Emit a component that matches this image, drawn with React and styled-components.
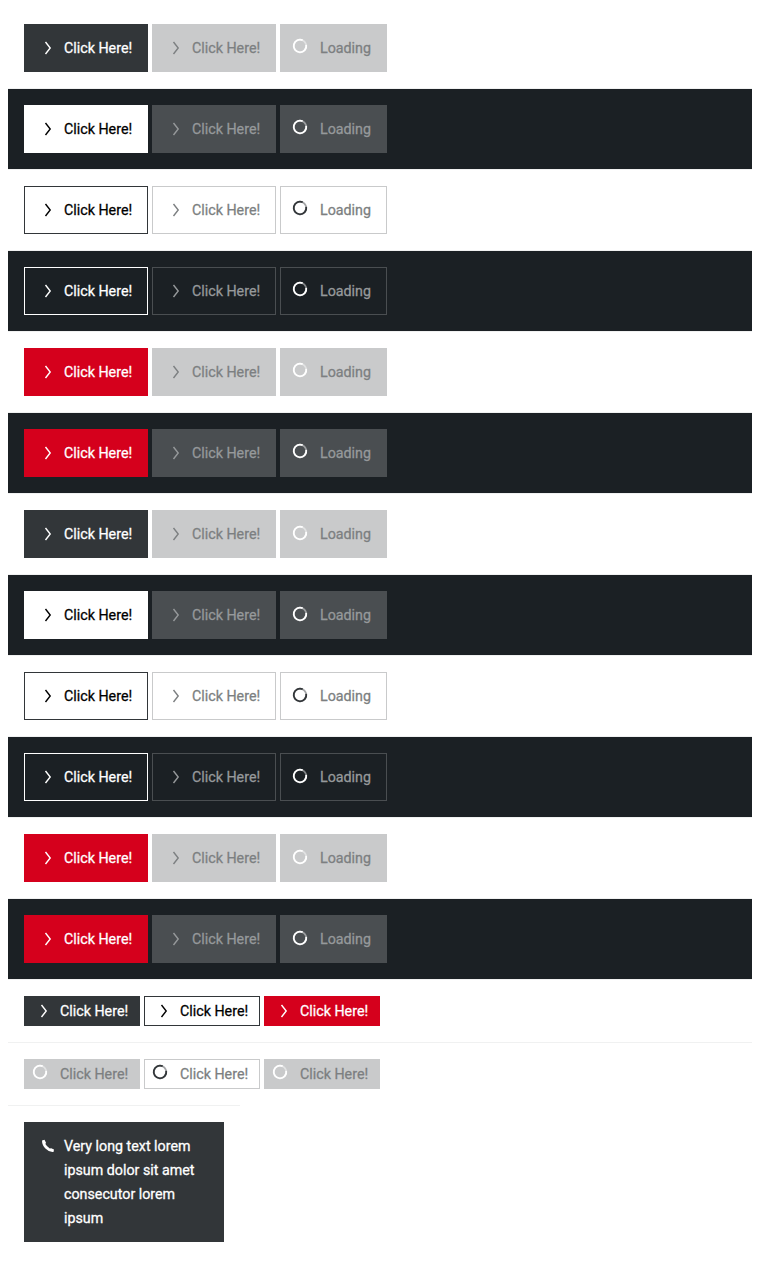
import React from "react";
import styled, { createGlobalStyle } from "styled-components";

const GlobalStyle = createGlobalStyle`
  body {
    margin: 8px;
    background: #fff;
    font-family: Roboto, "Liberation Sans", sans-serif;
  }
`;

const Row = styled.div`
  display: flex;
  gap: 4px;
  padding: 16px;
  background: ${(p) => (p.$dark ? "#1b2024" : "#fff")};
  & + & {
    border-top: 1px solid #f0f1f1;
  }
`;

const NarrowRow = styled(Row)`
  width: 200px;
`;

const palettes = {
  primary: ["#323639", "#323639", "#fff"],
  inverse: ["#fff", "#fff", "#000"],
  outline: ["#fff", "#323639", "#000"],
  outlineDark: ["#1b2024", "#fff", "#fff"],
  red: ["#d5001c", "#d5001c", "#fff"],
  muted: ["#c9cacb", "#c9cacb", "#7c7f81"],
  mutedDark: ["#4a4e51", "#4a4e51", "#96999b"],
  mutedOutline: ["#fff", "#c9cacb", "#7c7f81"],
  mutedOutlineDark: ["#1b2024", "#4a4e51", "#96999b"],
};

const ButtonBox = styled.button`
  box-sizing: border-box;
  display: flex;
  align-items: flex-start;
  margin: 0;
  width: ${(p) => p.$width}px;
  padding: ${(p) => (p.$small ? "2px 11px 2px 7px" : "11px 15px 11px 11px")};
  border: 1px solid ${(p) => palettes[p.$tone][1]};
  border-radius: 0;
  background: ${(p) => palettes[p.$tone][0]};
  color: ${(p) => palettes[p.$tone][2]};
  font: 400 15.5px/24px Roboto, "Liberation Sans", sans-serif;
  text-align: left;
`;

const WideButton = styled(ButtonBox)`
  height: 120px;
`;

const Icon = styled.svg`
  flex: none;
  width: 24px;
  height: 24px;
  margin-right: 4px;
`;

const Spinner = styled(Icon)`
  margin: ${(p) => p.$lift}px 8px 0 -4px;
  color: ${(p) => p.$color};
`;

const Label = styled.span`
  flex: none;
  white-space: pre;
  transform: scaleX(0.92);
  transform-origin: 0 50%;
  -webkit-text-stroke: 0.3px currentColor;
`;

const TextBlock = styled.span`
  display: flex;
  flex-direction: column;
`;

const Chevron = () => (
  <Icon viewBox="0 0 24 24">
    <path d="M9.5 6 L14.2 12 L9.5 18" fill="none" stroke="currentColor" strokeWidth="1.4" />
  </Icon>
);

const Loader = ({ color, lift }) => (
  <Spinner viewBox="0 0 24 24" $color={color} $lift={lift}>
    <circle cx="12" cy="12" r="6.3" fill="none" stroke="currentColor" strokeWidth="1.8" opacity="0.45" />
    <path d="M18.2 10.9 A6.3 6.3 0 1 1 14.7 6.3" fill="none" stroke="currentColor" strokeWidth="1.8" />
  </Spinner>
);

const Phone = () => (
  <Icon viewBox="0 0 24 24">
    <path
      d="M6 6.5 L8.5 5.8 L10 8.8 L9.4 10.1 Q11 12.8 13.8 14.6 L15.2 14.2 L18 15.6 L17.5 17.9 Q13 18.4 9.4 14.6 Q6 11 6 6.5Z"
      fill="currentColor"
    />
  </Icon>
);

const ActionButton = ({ tone, small, loading, spinner, lift = -2, text = "Click Here!" }) => (
  <ButtonBox
    type="button"
    $tone={tone}
    $small={small}
    $width={text === "Loading" ? 107 : small ? 116 : 124}
  >
    {loading ? <Loader color={spinner} lift={lift} /> : <Chevron />}
    <Label>{text}</Label>
  </ButtonBox>
);

const variants = [
  { dark: false, tone: "primary", muted: "muted", spinner: "#fff" },
  { dark: true, tone: "inverse", muted: "mutedDark", spinner: "#fff" },
  { dark: false, tone: "outline", muted: "mutedOutline", spinner: "#323639" },
  { dark: true, tone: "outlineDark", muted: "mutedOutlineDark", spinner: "#fff" },
  { dark: false, tone: "red", muted: "muted", spinner: "#fff" },
  { dark: true, tone: "red", muted: "mutedDark", spinner: "#fff" },
];

const lines = ["Very long text lorem", "ipsum dolor sit amet", "consecutor lorem", "ipsum"];

export default function App() {
  return (
    <>
      <GlobalStyle />
      {[-2, -1].map((lift) =>
        variants.map((v, i) => (
          <Row key={`${lift}${i}`} $dark={v.dark}>
            <ActionButton tone={v.tone} />
            <ActionButton tone={v.muted} />
            <ActionButton tone={v.muted} loading spinner={v.spinner} lift={lift} text="Loading" />
          </Row>
        ))
      )}
      <Row>
        <ActionButton small tone="primary" />
        <ActionButton small tone="outline" />
        <ActionButton small tone="red" />
      </Row>
      <Row>
        <ActionButton small loading tone="muted" spinner="#fff" />
        <ActionButton small loading tone="mutedOutline" spinner="#323639" />
        <ActionButton small loading tone="muted" spinner="#fff" />
      </Row>
      <NarrowRow>
        <WideButton type="button" $tone="primary" $width={200}>
          <Phone />
          <TextBlock>
            {lines.map((line) => (
              <Label key={line}>{line}</Label>
            ))}
          </TextBlock>
        </WideButton>
      </NarrowRow>
    </>
  );
}
